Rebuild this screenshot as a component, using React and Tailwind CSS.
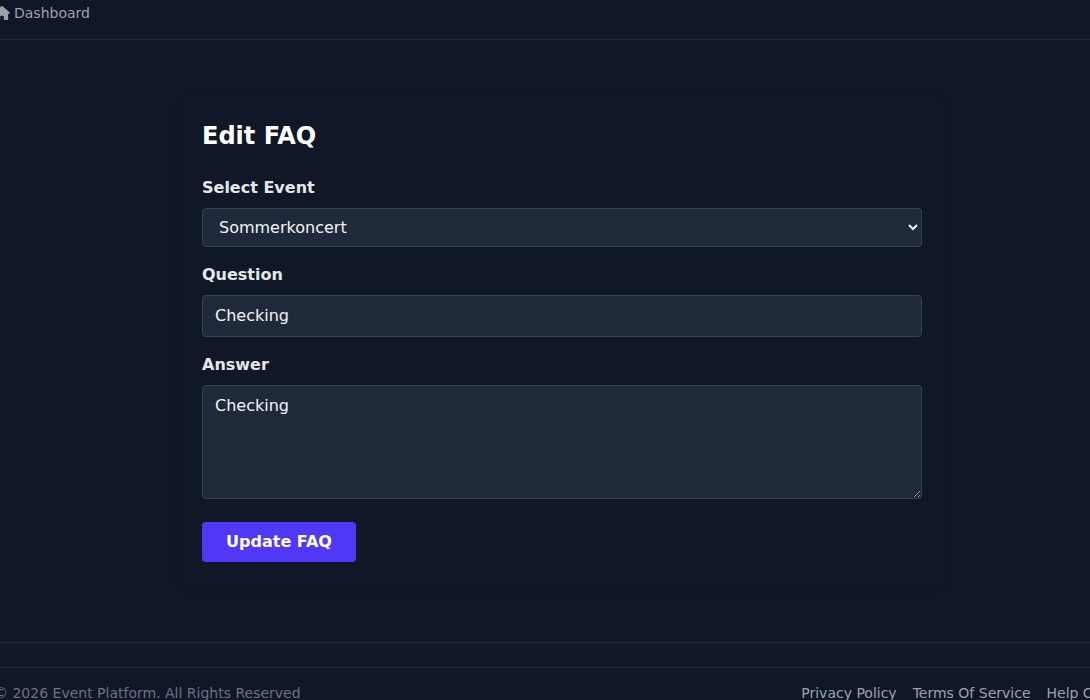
import React from "react";
import { FaHouse } from "react-icons/fa6";

export default function App() {
  return (
    <div className="h-[700px] w-[1090px] overflow-hidden bg-gray-900 font-['DejaVu_Sans',sans-serif]">
      <div className="ml-[-6px] w-[1136px]">
        <header className="flex h-[40px] items-start border-b border-gray-800 pt-[5px] text-[14px] leading-[16px] text-gray-400">
          <a className="flex items-center gap-[4px]">
            <FaHouse className="h-[14px] w-[16px]" />
            <span>Dashboard</span>
          </a>
        </header>

        <main className="flex h-[602px] justify-center pt-[57px]">
          <form className="h-[489px] w-[768px] rounded-lg bg-gray-900 p-6 shadow-[0_2px_6px_rgba(0,0,0,0.12)]">
            <h1 className="text-[24px] font-bold leading-[30px] text-white">Edit FAQ</h1>

            <label className="mt-[27px] block text-[16px] font-bold leading-[19px] text-gray-200">Select Event</label>
            <select className="mt-[11px] block h-[39px] w-[720px] rounded border border-gray-700 bg-gray-800 px-[12px] text-[16px] text-gray-100">
              <option>Sommerkoncert</option>
            </select>

            <label className="mt-[18px] block text-[16px] font-bold leading-[19px] text-gray-200">Question</label>
            <input
              readOnly
              value="Checking"
              className="mt-[11px] block h-[42px] w-[720px] rounded border border-gray-700 bg-gray-800 px-[12px] pb-[2px] text-[16px] text-gray-100"
            />

            <label className="mt-[18px] block text-[16px] font-bold leading-[19px] text-gray-200">Answer</label>
            <textarea
              readOnly
              value="Checking"
              className="mt-[11px] block h-[114px] w-[720px] rounded border border-gray-700 bg-gray-800 px-[12px] py-[10px] text-[16px] leading-[19px] text-gray-100"
            />

            <button
              type="button"
              className="mt-[23px] block h-[40px] w-[154px] rounded bg-indigo-600 text-[16px] font-bold text-white"
            >
              Update FAQ
            </button>
          </form>
        </main>

        <footer className="border-t border-gray-800 pt-[24px]">
          <div className="flex justify-between border-t border-gray-800 pt-[17px] text-[14px] leading-[16px]">
            <span className="text-gray-500">© 2026 Event Platform. All Rights Reserved</span>
            <nav className="flex gap-4 text-gray-400">
              <a>Privacy Policy</a>
              <a>Terms Of Service</a>
              <a>Help Center</a>
            </nav>
          </div>
        </footer>
      </div>
    </div>
  );
}
